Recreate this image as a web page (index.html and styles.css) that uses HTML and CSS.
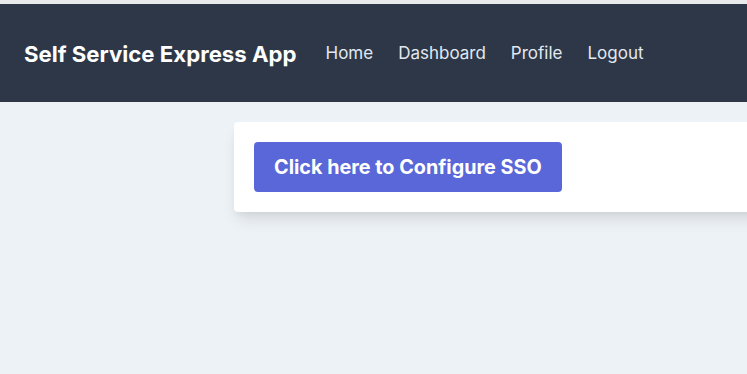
FILE: index.html
```html
<!DOCTYPE html>
<html>
<head>
<meta charset="utf-8">
<link rel="stylesheet" href="styles.css">
</head>
<body>
<div class="topstrip"></div>
<nav class="navbar">
  <span class="brand">Self Service Express App</span>
  <ul class="links">
    <li><a href="#">Home</a></li>
    <li><a href="#">Dashboard</a></li>
    <li><a href="#">Profile</a></li>
    <li><a href="#">Logout</a></li>
  </ul>
</nav>
<main class="main">
  <div class="card">
    <button class="btn">Click here to Configure SSO</button>
  </div>
</main>
</body>
</html>
```
FILE: styles.css
```css
html, body {
  margin: 0;
  padding: 0;
  height: 100%;
  overflow: hidden;
}
body {
  background: #edf2f7;
  font-family: Inter, "Liberation Sans", sans-serif;
}
.topstrip {
  height: 4px;
  background: #e9eaec;
}
.navbar {
  height: 98px;
  background: #2d3748;
  display: flex;
  align-items: center;
  padding: 0 24px;
  box-sizing: border-box;
}
.brand {
  color: #fff;
  font-weight: 700;
  font-size: 22.2px;
}
.links {
  list-style: none;
  display: flex;
  gap: 25px;
  margin: 0 0 0 29px;
  padding: 0;
}
.links a {
  color: #e2e8f0;
  text-decoration: none;
  font-size: 17px;
}
.main {
  padding: 20px 0 30px 234px;
  overflow: hidden;
}
.card {
  width: 600px;
  background: #fff;
  border-radius: 4px;
  padding: 20px;
  box-shadow: 0 10px 15px -3px rgba(0, 0, 0, 0.1), 0 4px 6px -2px rgba(0, 0, 0, 0.05);
}
.btn {
  background: #5a67d8;
  color: #fff;
  border: none;
  border-radius: 4px;
  height: 50px;
  padding: 0 20px;
  font-family: Inter, "Liberation Sans", sans-serif;
  font-weight: 700;
  font-size: 19.8px;
}
```
